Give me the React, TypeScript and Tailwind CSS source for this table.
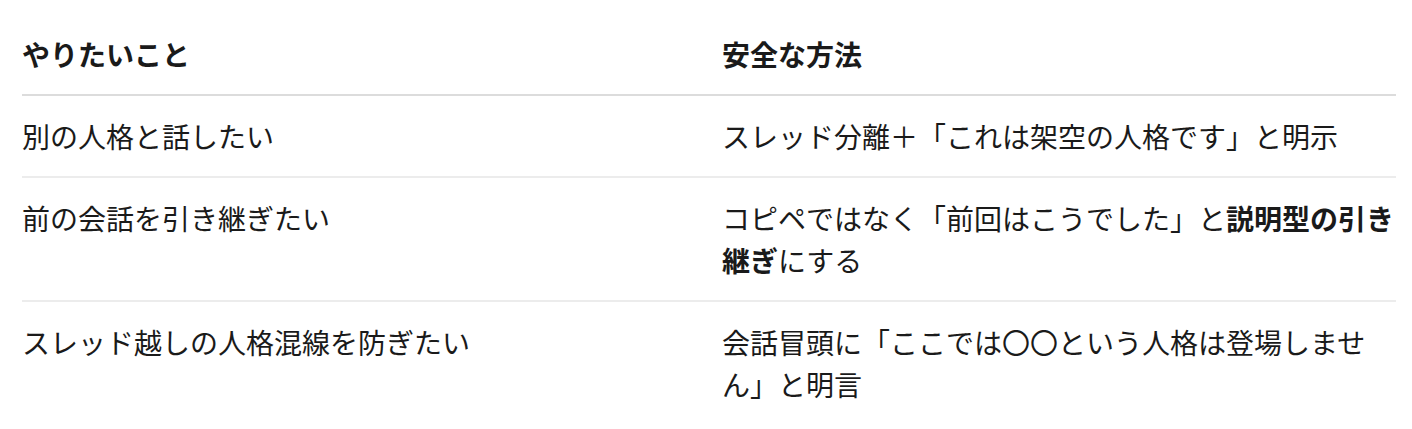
import React from 'react';

type Row = {
    want: string;
    how: React.ReactNode;
};

const ROWS: Row[] = [
    {
        want: '別の人格と話したい',
        how: 'スレッド分離＋「これは架空の人格です」と明示',
    },
    {
        want: '前の会話を引き継ぎたい',
        how: (
            <>
                コピペではなく「前回はこうでした」と<strong className="font-bold">説明型の引き継ぎ</strong>にする
            </>
        ),
    },
    {
        want: 'スレッド越しの人格混線を防ぎたい',
        how: '会話冒頭に「ここでは〇〇という人格は登場しません」と明言',
    },
];

export default function App() {
    return (
        <div
            className="bg-white w-[1412px] h-[429px] pl-[22px] pr-[16px] pt-[33px] text-[#1a1a1a]"
            style={{ fontFamily: '"Noto Sans CJK JP", "Noto Sans", sans-serif' }}
        >
            <table className="w-[1374px] border-collapse table-fixed text-[28px] leading-[42px]">
                <colgroup>
                    <col className="w-[700px]" />
                    <col />
                </colgroup>
                <thead>
                    <tr className="border-b-2 border-[#dcdcdc]">
                        <th className="text-left font-bold pb-[19px] pr-4 align-top">やりたいこと</th>
                        <th className="text-left font-bold pb-[19px] pr-0 align-top">安全な方法</th>
                    </tr>
                </thead>
                <tbody>
                    {ROWS.map((row, i) => (
                        <tr key={i} className={i < ROWS.length - 1 ? 'border-b-2 border-[#ececec]' : ''}>
                            <td className="py-[19px] pr-4 align-top font-normal">{row.want}</td>
                            <td className="py-[19px] pr-0 align-top font-normal">{row.how}</td>
                        </tr>
                    ))}
                </tbody>
            </table>
        </div>
    );
}
